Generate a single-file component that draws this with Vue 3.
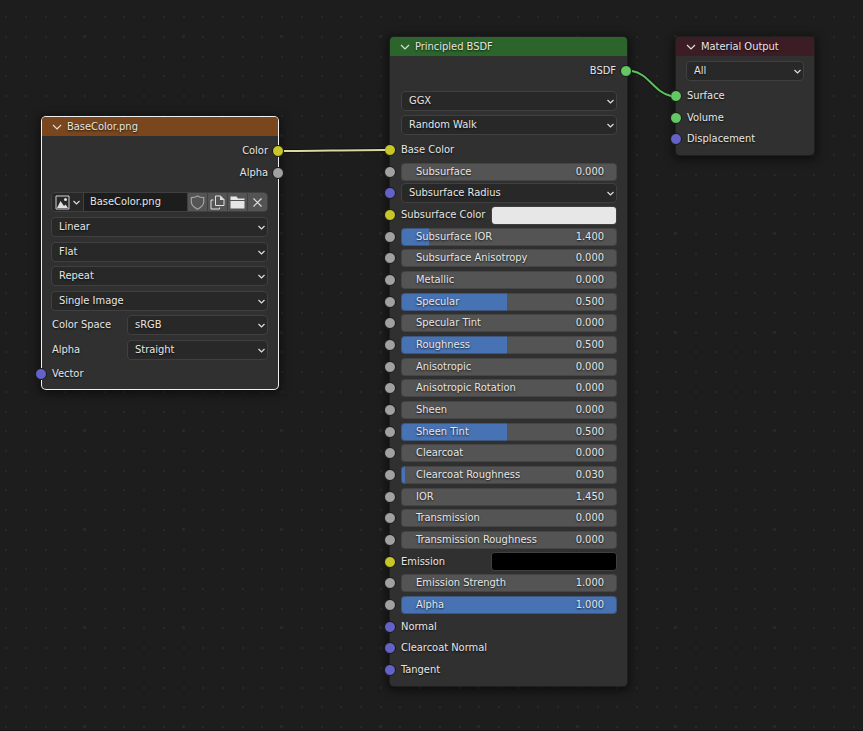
<script setup>
import { reactive, ref, onMounted, onUnmounted } from 'vue'

const imageSelects = reactive([
  { name: 'Interpolation', value: 'Linear', options: ['Linear', 'Closest', 'Cubic', 'Smart'] },
  { name: 'Projection', value: 'Flat', options: ['Flat', 'Box', 'Sphere', 'Tube'] },
  { name: 'Extension', value: 'Repeat', options: ['Repeat', 'Extend', 'Clip'] },
  { name: 'Source', value: 'Single Image', options: ['Single Image', 'Image Sequence', 'Movie'] },
])
const colorSpace = ref('sRGB')
const alphaMode = ref('Straight')
const fileName = ref('BaseColor.png')
const distribution = ref('GGX')
const scattering = ref('Random Walk')
const target = ref('All')
const radius = ref('Subsurface Radius')

const num = (label, value, fill = 0) => ({ kind: 'number', socket: 'gray', label, value, fill })
const inputs = reactive([
  { kind: 'label', socket: 'yellow', label: 'Base Color' },
  num('Subsurface', 0),
  { kind: 'vector', socket: 'blue', label: 'Subsurface Radius' },
  { kind: 'color', socket: 'yellow', label: 'Subsurface Color', value: '#e7e7e7' },
  num('Subsurface IOR', 1.4, 13),
  num('Subsurface Anisotropy', 0),
  num('Metallic', 0),
  num('Specular', 0.5, 49),
  num('Specular Tint', 0),
  num('Roughness', 0.5, 49),
  num('Anisotropic', 0),
  num('Anisotropic Rotation', 0),
  num('Sheen', 0),
  num('Sheen Tint', 0.5, 49),
  num('Clearcoat', 0),
  num('Clearcoat Roughness', 0.03, 2),
  num('IOR', 1.45),
  num('Transmission', 0),
  num('Transmission Roughness', 0),
  { kind: 'color', socket: 'yellow', label: 'Emission', value: '#000000' },
  num('Emission Strength', 1),
  num('Alpha', 1, 100),
  { kind: 'label', socket: 'blue', label: 'Normal' },
  { kind: 'label', socket: 'blue', label: 'Clearcoat Normal' },
  { kind: 'label', socket: 'blue', label: 'Tangent' },
])

// Dot grid: every fifth dot is a larger one.
const dots = ref('')
function drawGrid() {
  const step = 690 / 35
  let d = ''
  for (let j = -1; j * step + 36 < window.innerHeight; j++) {
    for (let i = -4; i * step + 84 < window.innerWidth; i++) {
      const x = Math.round(84 + i * step)
      const y = Math.round(36 + j * step)
      d += i % 5 === 0 && j % 5 === 0 ? `M${x - 1} ${y - 1}h3v3h-3z` : `M${x} ${y}h2v2h-2z`
    }
  }
  dots.value = d
}
onMounted(() => {
  drawGrid()
  window.addEventListener('resize', drawGrid)
})
onUnmounted(() => window.removeEventListener('resize', drawGrid))
</script>

<template>
  <main class="editor">
    <svg class="layer" aria-hidden="true"><path :d="dots" fill="#282828" /></svg>

    <section class="node image-node">
      <header class="head brown">
        <svg class="fold" viewBox="0 0 10 10"><path d="M1 3l4 4 4-4" /></svg>
        <h2>BaseColor.png</h2>
      </header>
      <div class="outputs">
        <div class="out">Color<i class="socket right yellow"></i></div>
        <div class="out">Alpha<i class="socket right gray"></i></div>
      </div>
      <div class="props">
        <div class="file">
          <button class="browse" aria-label="Browse image">
            <svg viewBox="0 0 15 15" width="15" height="15">
              <path d="M1 1h13v13H1z" fill="none" stroke="#cfcfcf" />
              <path d="M2 13L5.500 6l3.500 5 1.500-1.500L13 13z" fill="#e0e0e0" />
              <circle cx="10.500" cy="4.500" r="1.500" fill="#e0e0e0" />
            </svg>
            <svg viewBox="0 0 7 5" width="7" height="5"><path d="M.5 1l3 3 3-3" class="line" /></svg>
          </button>
          <input v-model="fileName" type="text" aria-label="Image name" />
          <button class="tool" aria-label="Fake user">
            <svg viewBox="0 0 15 15" width="15" height="15"><path d="M7.500 1C5.800 2.200 3.500 2.700 1.300 2.700v4.300c0 3.500 3 5.500 6.200 7.200 3.200-1.700 6.200-3.700 6.200-7.200V2.700C11.500 2.700 9.200 2.200 7.500 1z" fill="none" stroke="#a2a2a2" stroke-width="1.200" /></svg>
          </button>
          <button class="tool" aria-label="New image">
            <svg viewBox="0 0 15 15" width="15" height="15">
              <path d="M5.500 1h5L14 4.500v6H5.500z M3.500 5H1v9h8.500v-1.500" fill="none" stroke="#e0e0e0" />
              <path d="M10 .5v4.500h4.500z" fill="#e0e0e0" />
            </svg>
          </button>
          <button class="tool" aria-label="Open image">
            <svg viewBox="0 0 15 15" width="15" height="15"><path d="M.5 1.500h6l1.500 2h6.500v1.500H.5z M.5 6h14v7.500H.5z" fill="#e6e6e6" /></svg>
          </button>
          <button class="tool" aria-label="Unlink image">
            <svg viewBox="0 0 15 15" width="15" height="15"><path d="M3.500 3.500l8 8m0-8l-8 8" class="line" /></svg>
          </button>
        </div>
        <div v-for="s in imageSelects" :key="s.name" class="select">
          <select v-model="s.value" :aria-label="s.name">
            <option v-for="o in s.options" :key="o">{{ o }}</option>
          </select>
          <svg class="arrow" viewBox="0 0 7 5"><path d="M.5 1l3 3 3-3" class="line" /></svg>
        </div>
        <div class="pair">
          <label for="space">Color Space</label>
          <div class="select">
            <select id="space" v-model="colorSpace">
              <option>sRGB</option>
              <option>Non-Color</option>
            </select>
            <svg class="arrow" viewBox="0 0 7 5"><path d="M.5 1l3 3 3-3" class="line" /></svg>
          </div>
        </div>
        <div class="pair">
          <label for="alpha-mode">Alpha</label>
          <div class="select">
            <select id="alpha-mode" v-model="alphaMode">
              <option>Straight</option>
              <option>Premultiplied</option>
            </select>
            <svg class="arrow" viewBox="0 0 7 5"><path d="M.5 1l3 3 3-3" class="line" /></svg>
          </div>
        </div>
      </div>
      <div class="in">Vector<i class="socket left blue"></i></div>
    </section>

    <section class="node bsdf-node">
      <header class="head green-head">
        <svg class="fold" viewBox="0 0 10 10"><path d="M1 3l4 4 4-4" /></svg>
        <h2>Principled BSDF</h2>
      </header>
      <div class="outputs">
        <div class="out">BSDF<i class="socket right green"></i></div>
      </div>
      <div class="modes">
        <div class="select">
          <select v-model="distribution" aria-label="Distribution">
            <option>GGX</option>
            <option>Multiscatter GGX</option>
          </select>
          <svg class="arrow" viewBox="0 0 7 5"><path d="M.5 1l3 3 3-3" class="line" /></svg>
        </div>
        <div class="select">
          <select v-model="scattering" aria-label="Subsurface method">
            <option>Random Walk</option>
            <option>Christensen-Burley</option>
          </select>
          <svg class="arrow" viewBox="0 0 7 5"><path d="M.5 1l3 3 3-3" class="line" /></svg>
        </div>
      </div>
      <div class="inputs">
        <div v-for="(row, i) in inputs" :key="row.label" class="row">
          <i class="socket left" :class="row.socket"></i>
          <div v-if="row.kind === 'number'" class="slider">
            <input
              :id="'in' + i"
              type="range"
              min="0"
              max="100"
              :value="row.fill"
              :style="{ '--fill': row.fill + '%' }"
            />
            <label :for="'in' + i">{{ row.label }}</label>
            <output :for="'in' + i">{{ row.value.toFixed(3) }}</output>
          </div>
          <div v-else-if="row.kind === 'vector'" class="select">
            <select v-model="radius" :aria-label="row.label">
              <option>Subsurface Radius</option>
            </select>
            <svg class="arrow" viewBox="0 0 7 5"><path d="M.5 1l3 3 3-3" class="line" /></svg>
          </div>
          <div v-else-if="row.kind === 'color'" class="swatch">
            <label :for="'in' + i">{{ row.label }}</label>
            <input :id="'in' + i" v-model="row.value" type="color" />
          </div>
          <span v-else>{{ row.label }}</span>
        </div>
      </div>
    </section>

    <section class="node output-node">
      <header class="head maroon">
        <svg class="fold" viewBox="0 0 10 10"><path d="M1 3l4 4 4-4" /></svg>
        <h2>Material Output</h2>
      </header>
      <div class="target">
        <div class="select">
          <select v-model="target" aria-label="Target">
            <option>All</option>
            <option>Eevee</option>
            <option>Cycles</option>
          </select>
          <svg class="arrow" viewBox="0 0 7 5"><path d="M.5 1l3 3 3-3" class="line" /></svg>
        </div>
      </div>
      <div class="inputs">
        <div class="row">Surface<i class="socket left green"></i></div>
        <div class="row">Volume<i class="socket left green"></i></div>
        <div class="row">Displacement<i class="socket left blue"></i></div>
      </div>
    </section>

    <svg class="layer links" aria-hidden="true">
      <path d="M284 151C315 151 350 150 385 150" stroke="#111" stroke-width="4" />
      <path d="M284 151C315 151 350 150 385 150" stroke="#d9d9a0" stroke-width="2" />
      <path d="M632 71C648 73 655 93 671 96" stroke="#151515" stroke-width="4" />
      <path d="M632 71C648 73 655 93 671 96" stroke="#5cc25c" stroke-width="2" />
    </svg>
  </main>
</template>

<style>
body {
  margin: 0;
  background: #1d1d1d;
}
</style>

<style scoped>
.editor {
  position: relative;
  min-height: 100vh;
  overflow: hidden;
  box-sizing: border-box;
  border-bottom: 1px solid #181214;
  background: #1d1d1d;
  color: #e6e6e6;
  font: 11px/14px 'DejaVu Sans Condensed', 'Noto Sans', sans-serif;
  text-shadow: 0 1px 2px rgba(0, 0, 0, 0.8);
}
.editor * {
  box-sizing: border-box;
}
.layer {
  position: absolute;
  inset: 0;
  width: 100%;
  height: 100%;
  pointer-events: none;
}
.links path {
  fill: none;
}
.node {
  position: absolute;
  border-radius: 4px;
  background: #303030;
  box-shadow: 0 0 0 1px #1f1f1f, 0 2px 8px 3px rgba(0, 0, 0, 0.5);
}
.image-node {
  left: 42px;
  top: 117px;
  width: 236px;
  padding-bottom: 6px;
  box-shadow: 0 0 0 1px #f0f0f0, 0 2px 8px 3px rgba(0, 0, 0, 0.5);
}
.bsdf-node {
  left: 390px;
  top: 37px;
  width: 237px;
  padding-bottom: 5px;
}
.output-node {
  left: 676px;
  top: 37px;
  width: 138px;
  padding-bottom: 5px;
}
.head {
  display: flex;
  align-items: center;
  gap: 5px;
  height: 19px;
  padding-left: 10px;
  border-radius: 4px 4px 0 0;
}
.head h2 {
  margin: 0;
  font: inherit;
}
.brown {
  background: #79461d;
}
.green-head {
  background: #2b652b;
}
.maroon {
  background: #3c1d26;
}
.fold {
  width: 10px;
  height: 10px;
}
.fold path,
.line {
  fill: none;
  stroke: #dedede;
  stroke-width: 1.2;
}
.outputs {
  padding: 4px 10px 0;
}
.bsdf-node .outputs {
  padding-right: 11px;
}
.out {
  position: relative;
  display: flex;
  align-items: center;
  justify-content: flex-end;
  height: 22px;
}
.socket {
  position: absolute;
  top: calc(50% - 6px);
  width: 12px;
  height: 12px;
  border: 1px solid #161616;
  border-radius: 50%;
}
.left {
  left: -17px;
}
.right {
  right: -16px;
}
.yellow {
  background: #c7c729;
}
.gray {
  background: #a1a1a1;
}
.blue {
  background: #6363c7;
}
.green {
  background: #63c763;
}
.props {
  display: grid;
  grid-auto-rows: 25px 25px 24px 25px 24px;
  align-items: start;
  padding: 8px 10px 0 9px;
}
.file {
  display: flex;
  height: 20px;
  border: 1px solid #404040;
  border-radius: 4px;
  overflow: hidden;
}
.file button {
  display: flex;
  align-items: center;
  justify-content: center;
  height: 18px;
  padding: 0;
  border: 0;
  background: #282828;
}
.file .browse {
  gap: 3px;
  width: 31px;
}
.file input {
  flex: 1;
  min-width: 0;
  padding: 0 6px;
  border: 0;
  border-left: 1px solid #404040;
  background: #1d1d1d;
  color: inherit;
  font: inherit;
  text-shadow: inherit;
}
.file .tool {
  width: 20px;
  border-left: 1px solid #404040;
  background: #545454;
}
.select {
  display: grid;
  flex: 1;
  align-items: center;
}
.select select,
.arrow {
  grid-area: 1 / 1;
}
.select select {
  appearance: none;
  width: 100%;
  height: 20px;
  margin: 0;
  padding: 0 7px;
  border: 1px solid #404040;
  border-radius: 4px;
  background: #282828;
  color: inherit;
  font: inherit;
  text-shadow: inherit;
}
.arrow {
  justify-self: end;
  width: 7px;
  height: 5px;
  margin-right: 3px;
  pointer-events: none;
}
.pair {
  display: flex;
  align-items: center;
}
.pair label {
  width: 76px;
  padding-left: 1px;
}
.in,
.row {
  position: relative;
  display: flex;
  align-items: center;
}
.in {
  height: 18px;
  margin: 0 10px;
}
.modes {
  display: grid;
  gap: 4px;
  padding: 9px 10px 4px 11px;
}
.target {
  padding: 5px 10px 4px;
}
.inputs {
  display: grid;
  grid-auto-rows: 22px 21px 22px;
  padding: 0 10px 0 11px;
}
.slider {
  display: grid;
  flex: 1;
  grid-template-columns: 1fr auto;
  align-items: center;
}
.slider input {
  grid-area: 1 / 1 / 2 / 3;
  appearance: none;
  width: 100%;
  height: 18px;
  margin: 0;
  border: 1px solid rgba(48, 48, 48, 0.4);
  border-radius: 4px;
  background: linear-gradient(to right, #4772b3 var(--fill), #545454 var(--fill)) border-box;
}
.slider input::-webkit-slider-thumb {
  appearance: none;
  width: 1px;
  height: 1px;
  opacity: 0;
}
.slider label {
  grid-area: 1 / 1;
  z-index: 1;
  padding-left: 15px;
  pointer-events: none;
}
.slider output {
  grid-area: 1 / 2;
  z-index: 1;
  padding-right: 13px;
  pointer-events: none;
}
.swatch {
  display: flex;
  flex: 1;
  align-items: center;
  justify-content: space-between;
  white-space: nowrap;
}
.swatch input {
  appearance: none;
  flex: none;
  width: 126px;
  height: 19px;
  padding: 0;
  border: 1px solid #404040;
  border-radius: 4px;
  background: none;
  overflow: hidden;
}
.swatch input::-webkit-color-swatch-wrapper {
  padding: 0;
}
.swatch input::-webkit-color-swatch {
  border: 0;
}
</style>
